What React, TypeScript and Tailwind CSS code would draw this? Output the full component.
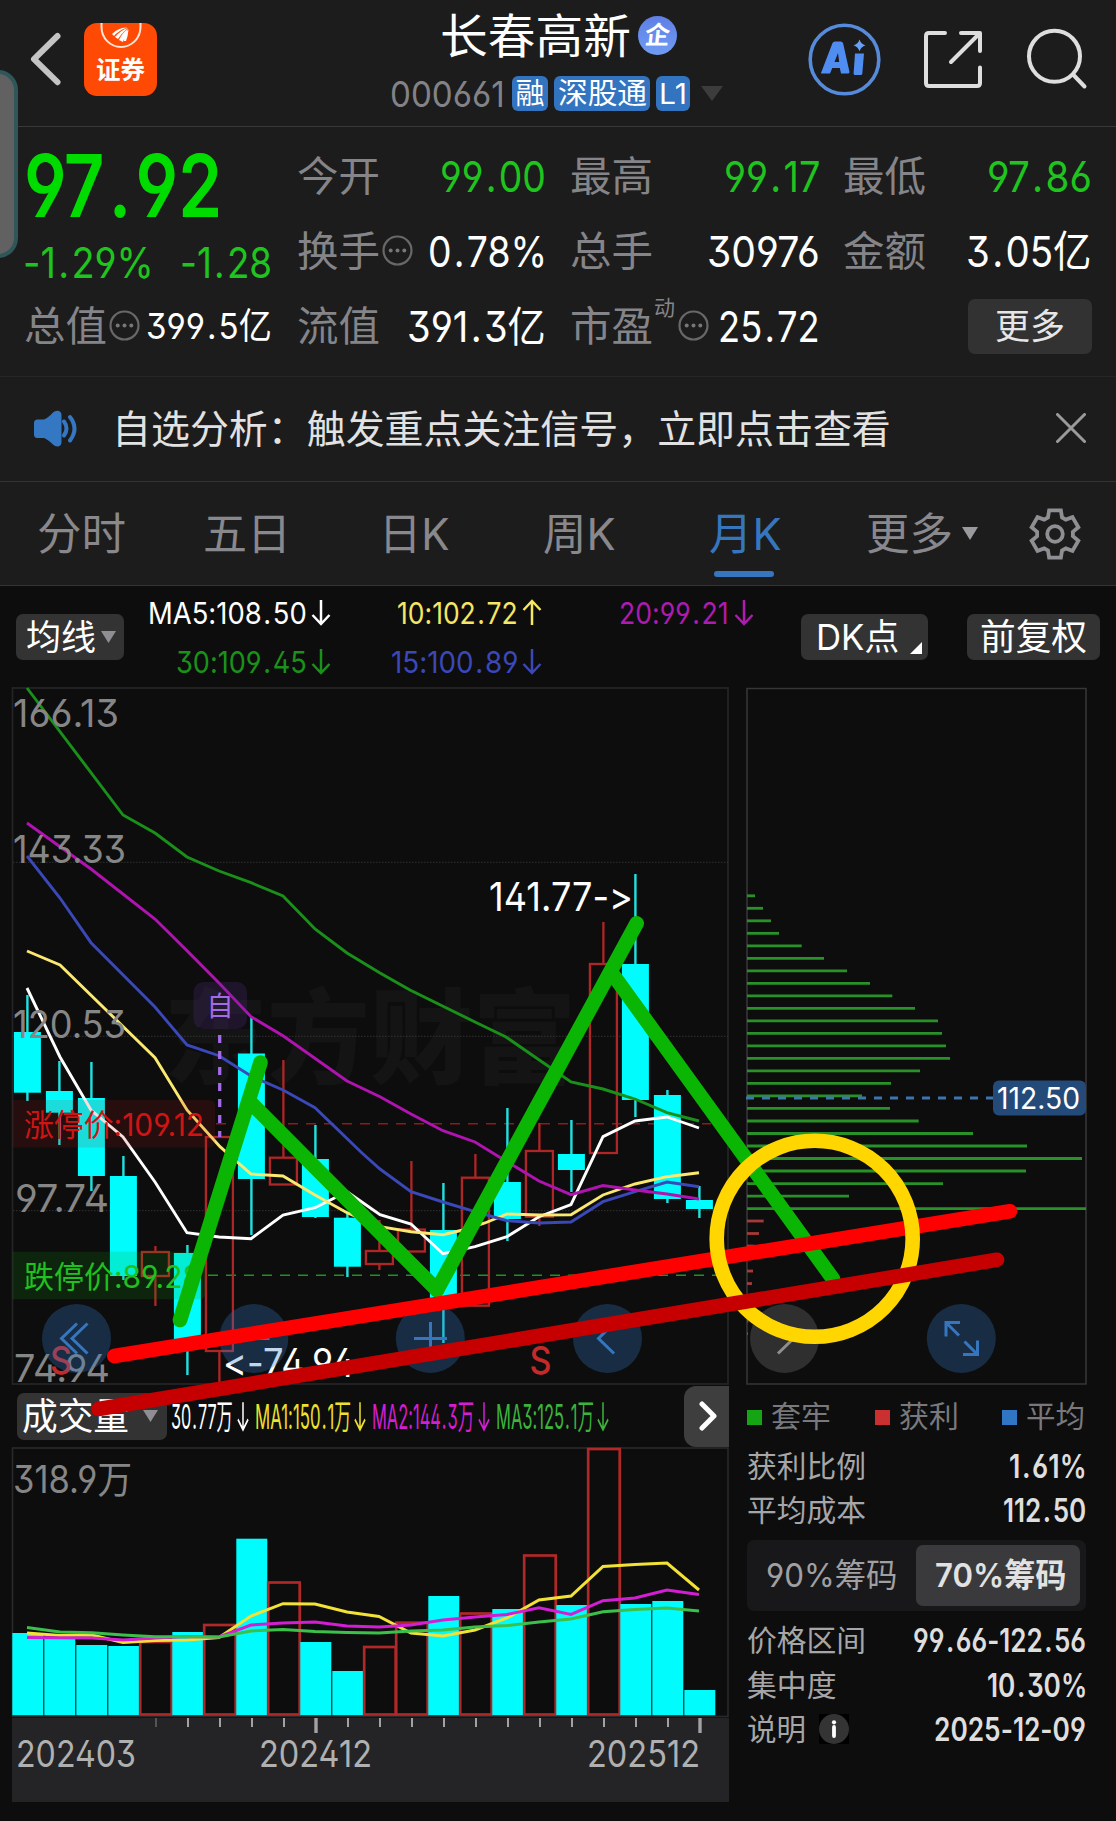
import React, { useLayoutEffect, useRef, useState } from "react";

/* Decimal points get a little extra room on both sides. */
function spaced(node: React.ReactNode): React.ReactNode {
  if (typeof node !== "string" || !node.includes(".")) return node;
  const [head, ...rest] = node.split(".");
  return (
    <>
      {head}
      {rest.map((part, i) => (
        <React.Fragment key={i}>
          <span className="mx-[0.06em]">.</span>
          {part}
        </React.Fragment>
      ))}
    </>
  );
}

/* Squeezes or stretches a line of text horizontally so it fills the width of its box. */
function Fit({ className, children }: { className: string; children: React.ReactNode }) {
  const outer = useRef<HTMLSpanElement>(null);
  const inner = useRef<HTMLSpanElement>(null);
  const [scale, setScale] = useState(1);
  useLayoutEffect(() => {
    if (outer.current && inner.current) {
      setScale(outer.current.offsetWidth / inner.current.offsetWidth);
    }
  }, []);
  return (
    <span ref={outer} className={`flex shrink-0 items-center whitespace-nowrap leading-none ${className}`}>
      <span ref={inner} className="inline-block origin-left" style={{ transform: `scaleX(${scale})` }}>
        {spaced(children)}
      </span>
    </span>
  );
}

function Dots() {
  return (
    <svg width="31" height="31" viewBox="0 0 31 31" className="-mt-[2px] shrink-0">
      <circle cx="15.5" cy="15.5" r="14" fill="none" stroke="#68686b" strokeWidth="2.2" />
      <g fill="#77777a">
        <circle cx="8.7" cy="15.5" r="2" />
        <circle cx="15.5" cy="15.5" r="2" />
        <circle cx="22.3" cy="15.5" r="2" />
      </g>
    </svg>
  );
}

function Arrow({ up, w = 20, h = 27 }: { up?: boolean; w?: number; h?: number }) {
  return (
    <svg width={w} height={h} viewBox="0 0 20 27" preserveAspectRatio="none" className="shrink-0">
      <path
        d={up ? "M10 26V2M1.5 11 10 2l8.500 9" : "M10 1v24M1.500 16 10 25l8.500-9"}
        fill="none"
        stroke="currentColor"
        strokeWidth="2.500"
      />
    </svg>
  );
}

function Header() {
  return (
    <header className="flex h-[127px] border-b border-[#383838]">
      <div className="flex w-[391px] pl-[28px] pt-[23px]">
        <svg width="36" height="73" viewBox="28 23 36 73">
          <path d="M57.500 36 34 59.200l23.500 23" fill="none" stroke="#c4c4c4" strokeWidth="6" strokeLinecap="round" strokeLinejoin="round" />
        </svg>
        <div className="ml-[20px] flex h-[73px] w-[73px] flex-col items-center overflow-hidden rounded-[13px] bg-[#ff4a05]">
          <svg width="44" height="27" viewBox="0 0 44 27">
            <path d="M2.500 0v4a19.500 20 0 0 0 39 0V0" fill="none" stroke="#ffe4d8" strokeWidth="2" />
            <path d="M13 11Q20 4 28 4.500Q19 8 15 13ZM16 14Q22 7 29 5Q22 11 19 16ZM20 17Q23 10 29 6Q26 12 24 19ZM25 18Q25 11 29.500 6.500Q29 13 27 18Z" fill="#fff" />
          </svg>
          <Fit className="mt-[7px] h-[26px] w-[49px] text-[25px] font-bold text-white">证券</Fit>
        </div>
      </div>
      <div className="flex w-[400px] flex-col">
        <div className="flex h-[70px] items-center pl-[49px]">
          <Fit className="w-[191px] text-[47px] text-white">长春高新</Fit>
          <span className="ml-[7px] flex h-[39px] w-[39px] items-center justify-center rounded-full bg-gradient-to-b from-[#5f7fe6] to-[#6f9cf2] text-[25px] font-bold leading-none text-white">
            <span className="-skew-x-6">企</span>
          </span>
        </div>
        <div className="mt-[6px] flex h-[35px] items-center">
          <Fit className="-ml-px w-[115px] text-[36px] text-[#838387]">000661</Fit>
          <span className="ml-[7px] flex h-[35px] w-[36px] items-center justify-center rounded-[6px] bg-[#3274bf] text-[29px] leading-none text-white">融</span>
          <span className="ml-[6px] flex h-[35px] w-[96px] items-center justify-center rounded-[6px] bg-[#3274bf] text-[29px] leading-none text-white">
            <Fit className="w-[89px]">深股通</Fit>
          </span>
          <span className="ml-[6px] flex h-[35px] w-[34px] items-center justify-center rounded-[6px] bg-[#3274bf] text-[29px] leading-none text-white">
            <Fit className="w-[28px]">L1</Fit>
          </span>
          <svg width="22" height="15" viewBox="0 0 22 15" className="ml-[11px]">
            <path d="M0 0h22L11 15Z" fill="#3c3c3d" />
          </svg>
        </div>
      </div>
      <div className="flex pl-[17px] pt-[23px]">
        <svg width="74" height="74" viewBox="808 23 74 74">
          <circle cx="844.500" cy="59.500" r="34.300" fill="none" stroke="#568bdc" strokeWidth="3.600" />
          <path fillRule="evenodd" d="M821 73 832.500 43q.8-1.500 2.500-1.500h5.500q2 0 2.600 1.800L849.500 72q0 1.500-1.500 1.500h-7l-1.200-5.500h-7.500l-2.300 5.500h-7.500q-1.500 0-1.500-.5ZM834.500 62h4.700l-1.200-9Z" fill="#4f8df0" />
          <path d="M855 53.500h9l-1.700 20q-.2 1.500-1.600 1.500h-5.600q-1.600 0-1.500-1.500Z" fill="#4f8df0" />
          <path d="M859.500 39.500q1.500 4.500 6 5.800-4.500 1.500-6 6-1.500-4.500-6-6 4.500-1.300 6-5.800Z" fill="#69a0f4" />
        </svg>
        <svg width="62" height="62" viewBox="922 29 62 62" className="ml-[40px] mt-[6px]" fill="none" stroke="#dedede" strokeWidth="4" strokeLinecap="round" strokeLinejoin="round">
          <path d="M945 33H929q-3 0-3 3v47q0 3 3 3h48q3 0 3-3V67.500M961 33h19v18M951 62l28-28" />
        </svg>
        <svg width="64" height="64" viewBox="1025 26 64 64" className="ml-[41px] mt-[3px]" fill="none" stroke="#dedede" strokeWidth="4" strokeLinecap="round">
          <circle cx="1054.500" cy="56.300" r="25.500" />
          <path d="m1073.500 75 11 11.500" />
        </svg>
      </div>
    </header>
  );
}

const cell = "flex h-[75px] items-center justify-between";
const lbl = "-ml-px w-[83px] text-[41px] text-[#858589]";

function Quotes() {
  return (
    <section className="flex h-[250px] border-b border-[#262626] pl-[25px] pt-[12px]">
      <div className="w-[247px]">
        <div className="flex h-[94px] items-center">
          <Fit className="-ml-px w-[198px] text-[86px] font-semibold text-[#00dc00]">97.92</Fit>
        </div>
        <div className="flex h-[59px] items-center justify-between text-[#1fc41f]">
          <Fit className="-ml-[2px] w-[131px] text-[42px]">-1.29%</Fit>
          <Fit className="w-[92px] text-[42px]">-1.28</Fit>
        </div>
        <div className="flex h-[68px] items-center">
          <Fit className={lbl}>总值</Fit>
          <span className="ml-[2px]"><Dots /></span>
          <Fit className="ml-[6px] w-[126px] text-[36px] text-white">399.5亿</Fit>
        </div>
      </div>
      <div className="ml-[26px] w-[248px]">
        <div className={cell}>
          <Fit className={lbl}>今开</Fit>
          <Fit className="w-[106px] text-[43px] text-[#1fc41f]">99.00</Fit>
        </div>
        <div className={cell}>
          <div className="flex items-center gap-[2px]"><Fit className={lbl}>换手</Fit><Dots /></div>
          <Fit className="-mr-px w-[119px] text-[43px] text-white">0.78%</Fit>
        </div>
        <div className={cell}>
          <Fit className={lbl}>流值</Fit>
          <Fit className="w-[139px] text-[42px] text-white">391.3亿</Fit>
        </div>
      </div>
      <div className="ml-[25px] w-[249px]">
        <div className={cell}>
          <Fit className={lbl}>最高</Fit>
          <Fit className="w-[96px] text-[43px] text-[#1fc41f]">99.17</Fit>
        </div>
        <div className={cell}>
          <Fit className={lbl}>总手</Fit>
          <Fit className="w-[113px] text-[43px] text-white">30976</Fit>
        </div>
        <div className={cell}>
          <div className="flex items-center">
            <Fit className={lbl}>市盈</Fit>
            <span className="-mt-[38px] ml-[1px] text-[21px] leading-none text-[#858589]">动</span>
            <span className="ml-[3px]"><Dots /></span>
          </div>
          <Fit className="w-[102px] text-[42px] text-white">25.72</Fit>
        </div>
      </div>
      <div className="ml-[24px] w-[248px]">
        <div className={cell}>
          <Fit className={lbl}>最低</Fit>
          <Fit className="w-[105px] text-[43px] text-[#1fc41f]">97.86</Fit>
        </div>
        <div className={cell}>
          <Fit className={lbl}>金额</Fit>
          <Fit className="w-[126px] text-[43px] text-white">3.05亿</Fit>
        </div>
        <div className="flex h-[75px] items-center justify-end">
          <button className="flex h-[55px] w-[124px] items-center justify-center rounded-[7px] bg-[#323232] text-[35px] leading-none text-[#e6e6e6]">更多</button>
        </div>
      </div>
    </section>
  );
}

function Notice() {
  return (
    <section className="flex h-[105px] items-center border-b border-[#333] pl-[34px]">
      <svg width="44" height="38" viewBox="0 0 44 38">
        <path d="M0 13q0-3.500 3.500-3.500H10Q14 8 19 2.500Q21 .5 24 .8Q27.500 1.500 27.500 5v27q0 3.800-3.500 4.500-3 .2-5-2Q14 29.500 10 28H3.500Q0 28 0 24.500Z" fill="#3478c4" />
        <path d="M30 11.500q5 7 0 14M36 7q9 11.500 0 23.500" fill="none" stroke="#3478c4" strokeWidth="4" strokeLinecap="round" />
      </svg>
      <Fit className="ml-[34px] w-[779px] text-[38.900px] text-[#e2e2e2]">自选分析：触发重点关注信号，立即点击查看</Fit>
      <svg width="30" height="30" viewBox="0 0 30 30" className="-mt-[2px] ml-[165px]">
        <path d="m1.500 1.500 27 27m0-27-27 27" stroke="#9b9b9b" strokeWidth="3" strokeLinecap="round" />
      </svg>
    </section>
  );
}

const gear = Array.from({ length: 6 }, (_, k) =>
  [[18, -23], [24.300, -14], [24.300, 14], [18, 23]].map(([r, d]) => {
    const a = ((k * 60 - 90 + d) * Math.PI) / 180;
    return `${(26 + r * Math.cos(a)).toFixed(2)},${(26 + r * Math.sin(a)).toFixed(2)}`;
  }).join(" ")
).join(" ");

function Tabs() {
  return (
    <nav className="flex h-[104px] items-center border-b border-[#343434] pl-[37px] text-[44px] text-[#88888d]">
      <Fit className="w-[89px]">分时</Fit>
      <Fit className="ml-[77px] w-[88px]">五日</Fit>
      <Fit className="ml-[88px] w-[71px]">日K</Fit>
      <Fit className="ml-[93px] w-[73px]">周K</Fit>
      <div className="relative ml-[93px] flex h-full items-center text-[#3576bf]">
        <Fit className="w-[73px]">月K</Fit>
        <span className="absolute bottom-[8px] left-[5px] h-[6px] w-[60px] rounded-full bg-[#3576bf]" />
      </div>
      <Fit className="ml-[84px] w-[87px]">更多</Fit>
      <svg width="16" height="13" viewBox="0 0 16 13" className="ml-[9px]"><path d="M0 0h16L8 13Z" fill="#9a9a9e" /></svg>
      <svg width="52" height="52" viewBox="0 0 52 52" className="ml-[51px]" fill="none" stroke="#8e8e93">
        <polygon points={gear} strokeWidth="3.800" strokeLinejoin="miter" />
        <circle cx="26" cy="26" r="7.800" strokeWidth="3.800" />
      </svg>
    </nav>
  );
}

function Averages() {
  return (
    <section className="flex h-[102px] pl-[16px] text-[30px]">
      <button className="mt-[28px] flex h-[46px] w-[108px] items-center rounded-[7px] bg-[#333] pl-[10px] text-[35px] text-white">
        <Fit className="w-[70px]">均线</Fit>
        <svg width="15" height="12" viewBox="0 0 15 12" className="ml-[5px]"><path d="M0 0h15L7.500 12Z" fill="#8e8e93" /></svg>
      </button>
      <div className="flex w-[207px] flex-col items-end pt-[2px]">
        <div className="flex h-[49px] items-center gap-[4px] text-white"><Fit className="w-[159px]">MA5:108.50</Fit><Arrow /></div>
        <div className="flex h-[49px] items-center gap-[4px] text-[#1a921a]"><Fit className="w-[131px]">30:109.45</Fit><Arrow /></div>
      </div>
      <div className="flex w-[211px] flex-col items-end pt-[2px]">
        <div className="flex h-[49px] items-center gap-[4px] text-[#f5e663]"><Fit className="w-[121px]">10:102.72</Fit><Arrow up /></div>
        <div className="flex h-[49px] items-center gap-[4px] text-[#3a48b8]"><Fit className="w-[127px]">15:100.89</Fit><Arrow /></div>
      </div>
      <div className="flex w-[212px] flex-col items-end pt-[2px]">
        <div className="flex h-[49px] items-center gap-[5px] text-[#ae1bae]"><Fit className="w-[110px]">20:99.21</Fit><Arrow /></div>
      </div>
      <button className="ml-[47px] mt-[28px] flex h-[46px] w-[127px] items-center rounded-[7px] bg-[#333] pl-[15px] text-[36px] text-white">
        <Fit className="w-[83px]">DK点</Fit>
        <svg width="12" height="12" viewBox="0 0 12 12" className="ml-[11px] mt-[21px]"><path d="M12 0v12H0Z" fill="#fff" /></svg>
      </button>
      <button className="ml-[39px] mt-[28px] flex h-[46px] w-[133px] items-center justify-center rounded-[7px] bg-[#333] text-[36px] text-white">
        <Fit className="w-[107px]">前复权</Fit>
      </button>
    </section>
  );
}

/* [high, body top, body bottom, low, rising] */
const candles: [number, number, number, number, boolean][] = [
  [995, 1032, 1092.7, 1101, false], [1061, 1091, 1112.7, 1145, false], [1062, 1098, 1176, 1191, false],
  [1156, 1176, 1276, 1280, false], [1246, 1252, 1276, 1306, true], [1245, 1253, 1339, 1375, false],
  [1137, 1137, 1351, 1382, true], [1017, 1053.500, 1179, 1235, false], [1060, 1157.700, 1184.500, 1184.500, true],
  [1125, 1159, 1217, 1218, false], [1214, 1217.700, 1266.700, 1277, false], [1220, 1251, 1264, 1270, true],
  [1161, 1229.500, 1251.500, 1251.500, true], [1183, 1230, 1298, 1343, false], [1154, 1177.700, 1305.700, 1305.700, true],
  [1108, 1182, 1219, 1241, false], [1123, 1151, 1216.700, 1226, true], [1120, 1154, 1170, 1192, false],
  [922, 964, 1153, 1153, true], [874, 964, 1100, 1117, false], [1090, 1095, 1199, 1203, false], [1186, 1200, 1209, 1218, false],
];

const maLines: [string, string][] = [
  ["#fff", "27,988 60,1057 91,1110 123,1137 155,1182 187,1232.700 219,1237 251,1238.700 283,1215 315,1207.700 347,1191.700 360,1200.700 380,1214.700 411,1224 443,1253.700 475,1246.700 507,1236.700 539,1216.700 571,1204.700 603,1136.700 635,1121 667,1117 699,1128"],
  ["#fbe870", "27,951 60,965 155,1057.700 187,1110 220,1146.700 251,1174 283,1176 315,1195 347,1212.700 380,1226.700 411,1231.700 443,1234.700 463,1230 485,1223 507,1214 539,1215 571,1214.700 603,1195 635,1184 667,1176.700 699,1172.700"],
  ["#3a48b8", "27,856 60,898 91,942.700 155,1007 187,1045 219,1055.700 251,1076 283,1090 315,1107.700 362,1153 380,1169 411,1191.700 443,1202 475,1211.700 507,1220.700 539,1223 571,1222 603,1201.700 635,1191.700 667,1182 699,1186.700"],
  ["#b014b0", "27,823 91,869 155,919 187,950.700 219,983 251,1016.700 283,1035.700 347,1081 380,1096.700 411,1114 443,1130.700 475,1142 507,1161.700 539,1181 571,1194.700 603,1185.500 635,1190 667,1194 699,1199"],
  ["#1a901a", "27,688 123,815 155,833 187,857 219,871 251,882.700 283,896 315,929 347,953 380,973 410,990 475,1022 506,1037 571,1082 603,1089 635,1099 667,1112.700 699,1121"],
];

const scale: [string, number, number, number][] = [
  ["166.13", 727, 13, 106], ["143.33", 863, 13, 113], ["120.53", 1037.600, 13, 113], ["97.74", 1211.700, 15, 94], ["74.94", 1382, 14, 96],
];

const fit = { lengthAdjust: "spacingAndGlyphs" } as const;

function RoundButton({ x, muted, d }: { x: number; muted?: boolean; d: string }) {
  return (
    <g>
      <circle cx={x} cy="1338.500" r="34.500" fill={muted ? "rgba(125,125,125,.3)" : "rgba(50,118,196,.3)"} />
      <path d={d} fill="none" stroke={muted ? "#8f8f8f" : "#3576bf"} strokeWidth="3" />
    </g>
  );
}

function PriceChart() {
  return (
    <svg width="738" height="698" viewBox="0 687 738 698" className="block">
      <text x="164" y="1076" fontSize="103" fontWeight="900" fill="#141414">东方财富</text>
      <rect x="12.500" y="688" width="715.500" height="696" fill="none" stroke="#242426" strokeWidth="1.800" />
      {[862.300, 1036.300, 1210.700].map((y) => (
        <path key={y} d={`M13 ${y}H728`} stroke="#333" strokeWidth="1" strokeDasharray="1.500 1.500" />
      ))}
      <path d="M216 1123.700H711" stroke="#8e1a1a" strokeWidth="1.500" strokeDasharray="10 8" />
      <path d="M208 1275.300H717" stroke="#229022" strokeWidth="1.500" strokeDasharray="10 8" />
      {candles.map(([hi, top, bot, lo, up], i) => {
        const x = 27.400 + i * 32;
        return up ? (
          <g key={i} fill="none" stroke="#b02626" strokeWidth="2.300">
            <path d={`M${x} ${hi}V${top}M${x} ${bot}V${lo}`} />
            <rect x={x - 13.500} y={top} width="27" height={bot - top} />
          </g>
        ) : (
          <g key={i} fill="#00fcfc">
            <rect x={x - 1.200} y={hi} width="2.400" height={lo - hi} fill="#22e0e0" />
            <rect x={x - 13.500} y={top} width="27" height={bot - top} />
          </g>
        );
      })}
      {maLines.map(([c, pts]) => (
        <polyline key={c} points={pts} fill="none" stroke={c} strokeWidth="2.900" />
      ))}
      <rect x="193.500" y="982" width="53.500" height="47" rx="10" fill="#5a3090" fillOpacity=".23" />
      <text x="206.500" y="1016" fontSize="27" fill="#a26ce8">自</text>
      <path d="M219.700 1035V1137" stroke="#a26ce8" strokeWidth="3.300" strokeDasharray="8 8" />
      <path d="M12.500 1100H209q6 0 6 6v35.500q0 6-6 6H12.500Z" fill="#c81414" fillOpacity=".14" />
      <text x="24" y="1135.500" fontSize="31" textLength="180" {...fit} fill="#d01414">涨停价:109.12</text>
      <path d="M12.500 1251.700H199q6 0 6 6v35.500q0 6-6 6H12.500Z" fill="#14a014" fillOpacity=".17" />
      <text x="24" y="1287.500" fontSize="31" textLength="177" {...fit} fill="#20c020">跌停价:89.28</text>
      <g fill="#868686" fontSize="38.500">
        {scale.map(([t, y, x, w]) => (
          <text key={t} x={x} y={y} textLength={w} {...fit}>{t}</text>
        ))}
      </g>
      <g fill="#fff" fontSize="39">
        <text x="489" y="911" textLength="144" {...fit}>141.77-&gt;</text>
        <text x="223" y="1377" textLength="132" {...fit}>&lt;-74.94</text>
      </g>
      <g fill="#c42a2a" fontSize="38.500" fontWeight="500">
        <text x="50" y="1373.500" textLength="22" {...fit}>S</text>
        <text x="529.500" y="1373.500" textLength="22" {...fit}>S</text>
      </g>
      <RoundButton x={76.500} d="M77 1323.500 61.500 1338.500 77 1353.500M87.500 1323.500 72 1338.500l15.500 15" />
      <RoundButton x={253.800} d="M237.500 1338.500h32" />
      <RoundButton x={430.300} d="M414 1338.500h33M430.500 1322v33" />
      <RoundButton x={607.500} d="M614 1323 598.500 1338.500l15.500 15" />
    </svg>
  );
}

const chips = [75, 99, 123, 147, 215, 282, 351, 420, 487, 555, 624, 636, 648, 660, 570, 483, 396, 480, 566, 729, 891, 1056, 888, 639, 357, 1068];
const profit = [101, 87, 74, 71, 69, 66, 62, 57, 55, 54];

function ChipChart() {
  return (
    <svg width="378" height="698" viewBox="738 687 378 698" className="block">
      <path d="M747 688.500H1086V1384H747Z" fill="none" stroke="#363638" strokeWidth="1.600" />
      {chips.map((v, i) => (
        <path key={i} d={`M747 ${895.800 + i * 12.510}H${730 + v / 3}`} stroke="#289228" strokeWidth="2.800" />
      ))}
      {profit.map((v, i) => (
        <path key={i} d={`M747 ${1221 + i * 12.510}H${730 + v / 3}`} stroke="#a63a38" strokeWidth="2.800" />
      ))}
      <path d="M746 1098H993" stroke="#3e74b0" strokeWidth="3.200" strokeDasharray="8 8" />
      <rect x="993" y="1080.500" width="93" height="35" rx="6" fill="#244a7a" />
      <text x="997" y="1108.700" fontSize="29.500" textLength="83" {...fit} fill="#fff">112.50</text>
      <RoundButton x={784.500} muted d="M778 1323l15.500 15.500L778 1353.500" />
      <RoundButton x={961.300} d="M960 1322.500h-14v14M946 1322.500l13 13M963 1354.500h14.500v-14M977.500 1354.500l-13-13" />
    </svg>
  );
}

function VolumeBar() {
  return (
    <div className="flex h-[62px] items-center pl-[17px] text-[34px]">
      <button className="flex h-[47px] w-[150px] items-center rounded-[7px] bg-[#333] pl-[5px] text-[37px] text-white">
        <Fit className="mt-px w-[107px]">成交量</Fit>
        <svg width="15" height="12" viewBox="0 0 15 12" className="ml-[14px]"><path d="M0 0h15L7.500 12Z" fill="#8e8e93" /></svg>
      </button>
      <div className="ml-[4px] flex items-center gap-[4px] pt-px text-white"><Fit className="w-[62px]">30.77万</Fit><Arrow w={12} h={31} /></div>
      <div className="ml-[6px] flex items-center gap-[3px] pt-px text-[#eee02c]"><Fit className="w-[96px]">MA1:150.1万</Fit><Arrow w={12} h={31} /></div>
      <div className="ml-[6px] flex items-center gap-[4px] pt-px text-[#d41ed4]"><Fit className="w-[102px]">MA2:144.3万</Fit><Arrow w={12} h={31} /></div>
      <div className="ml-[6px] flex items-center gap-[3px] pt-px text-[#3cb43c]"><Fit className="w-[98px]">MA3:125.1万</Fit><Arrow w={12} h={31} /></div>
      <button className="ml-auto mr-[17px] flex h-[61px] w-[45px] items-center justify-end rounded-l-[12px] bg-[#3e3e3e] pr-[10px]">
        <svg width="20" height="30" viewBox="0 0 20 30"><path d="m3 3 12 12L3 27" fill="none" stroke="#fff" strokeWidth="5" strokeLinecap="round" strokeLinejoin="round" /></svg>
      </button>
    </div>
  );
}

/* [bar top, rising] */
const volumes: [number, boolean][] = [
  [1633, false], [1639, false], [1645, false], [1646, false], [1642, true], [1632, false], [1625, true], [1538.700, false],
  [1582.500, true], [1642, false], [1671, false], [1647, true], [1622.700, true], [1596, false], [1613.500, true], [1609, false],
  [1555.500, true], [1605, false], [1449, true], [1604, false], [1601, false], [1690, false],
];

const volLines: [string, string][] = [
  ["#f2e235", "27,1633 60,1635.500 92,1635 123,1642.500 155,1640.500 187,1640 219,1637.500 251,1616 283,1603.700 315,1604 347,1612 379,1616.500 411,1633 443,1636 475,1630 507,1618 539,1600 571,1596 603,1566.500 635,1564.500 667,1563 699,1590"],
  ["#d41ed4", "27,1637.500 92,1638 123,1640 155,1638 187,1636.500 219,1637 251,1625 283,1623 315,1622 347,1626 379,1627 411,1625 443,1620 475,1617 507,1614.500 539,1607.700 571,1614.500 603,1600.700 635,1598 667,1590 699,1594.500"],
  ["#3cc04c", "27,1627.500 60,1632 92,1632.700 123,1635 155,1636.700 187,1636.700 219,1637 251,1631 283,1629.500 315,1631.500 347,1632.500 379,1633 411,1631 443,1630 475,1627 507,1625.500 539,1622 571,1619 603,1611.700 635,1609.500 667,1608 699,1611"],
];

function VolumeChart() {
  return (
    <svg width="738" height="355" viewBox="0 1447 738 355" className="block">
      <rect x="12.500" y="1448" width="715.500" height="268.500" fill="none" stroke="#2a2a2c" strokeWidth="1.600" />
      <text x="13" y="1492.500" fontSize="37.500" textLength="119" {...fit} fill="#868686">318.9万</text>
      {volumes.map(([top, up], i) =>
        up ? (
          <rect key={i} x={12.200 + i * 32} y={top} width="31.500" height={1714.500 - top} fill="none" stroke="#b02828" strokeWidth="2.700" />
        ) : (
          <rect key={i} x={12.300 + i * 32} y={top} width="31" height={1715.300 - top} fill="#00fcfc" />
        )
      )}
      {volLines.map(([c, pts]) => (
        <polyline key={c} points={pts} fill="none" stroke={c} strokeWidth="3" />
      ))}
      <rect x="12" y="1718" width="717" height="84" fill="#242426" />
      {Array.from({ length: 18 }, (_, i) => {
        const major = i === 5 || i === 17;
        return <path key={i} d={`M${156 + i * 32} 1718v${major ? 15 : 9}`} stroke={i === 0 ? "#555" : "#a2a2a4"} strokeWidth={major ? 3.400 : 2} />;
      })}
      <g fill="#b0b0b0" fontSize="36.500">
        <text x="16" y="1767" textLength="120" {...fit}>202403</text>
        <text x="259" y="1767" textLength="113" {...fit}>202412</text>
        <text x="587" y="1767" textLength="113" {...fit}>202512</text>
      </g>
    </svg>
  );
}

const name = "text-[29.500px] text-[#a6a6a8]";
const value = "text-[32px] font-semibold text-[#dedede]";

function ChipStats() {
  return (
    <div className="flex w-[340px] flex-col pl-px pt-px">
      <div className="flex h-[62px] items-center justify-between pr-[1px] text-[29.500px] text-[#79797d]">
        <span className="flex items-center gap-[9px]"><i className="h-[15px] w-[15px] bg-[#14a414]" /><Fit className="w-[60px]">套牢</Fit></span>
        <span className="flex items-center gap-[9px]"><i className="h-[15px] w-[15px] bg-[#cb3030]" /><Fit className="w-[60px]">获利</Fit></span>
        <span className="flex items-center gap-[9px]"><i className="h-[15px] w-[15px] bg-[#3076c4]" /><Fit className="w-[59px]">平均</Fit></span>
      </div>
      <div className="flex h-[38px] items-center justify-between"><Fit className={`w-[119px] ${name}`}>获利比例</Fit><Fit className={`-mr-px w-[78px] ${value}`}>1.61%</Fit></div>
      <div className="mt-[6px] flex h-[38px] items-center justify-between"><Fit className={`w-[119px] ${name}`}>平均成本</Fit><Fit className={`w-[83px] ${value}`}>112.50</Fit></div>
      <div className="mt-[10px] flex h-[71px] items-center rounded-[7px] bg-[#18181a] pl-[19px] text-[33px]">
        <Fit className="w-[131px] text-[#a0a0a2]">90%筹码</Fit>
        <span className="ml-[19px] flex h-[61px] w-[164px] items-center justify-center rounded-[7px] bg-[#3a3a3c]">
          <Fit className="ml-[4px] w-[131px] font-semibold text-[#e2e2e2]">70%筹码</Fit>
        </span>
      </div>
      <div className="mt-[11px] flex h-[38px] items-center justify-between"><Fit className={`w-[119px] ${name}`}>价格区间</Fit><Fit className={`w-[173px] ${value}`}>99.66-122.56</Fit></div>
      <div className="mt-[7px] flex h-[38px] items-center justify-between"><Fit className={`w-[90px] ${name}`}>集中度</Fit><Fit className={`-mr-px w-[100px] ${value}`}>10.30%</Fit></div>
      <div className="mt-[6px] flex h-[38px] items-center">
        <Fit className={`w-[59px] ${name}`}>说明</Fit>
        <svg width="30" height="30" viewBox="0 0 30 30" className="-mt-[2px] ml-[13px]">
          <rect width="30" height="30" fill="#000" />
          <circle cx="15" cy="15" r="15" fill="#343434" />
          <circle cx="15" cy="8.300" r="2.100" fill="#fff" />
          <path d="M15 13v9" stroke="#fff" strokeWidth="3.800" strokeLinecap="round" />
        </svg>
        <Fit className={`ml-auto w-[152px] ${value}`}>2025-12-09</Fit>
      </div>
    </div>
  );
}

function Drawing() {
  return (
    <svg width="1116" height="741" viewBox="0 687 1116 741" className="pointer-events-none absolute left-0 top-0" fill="none" strokeLinecap="round" strokeWidth="14.600">
      <g stroke="#0bb503">
        <path d="M180 1320 260.500 1062.500" />
        <path d="M252 1104 437 1290" />
        <path d="M437 1290 636.700 923.300" />
        <path d="M614 976 833 1279" />
      </g>
      <path d="M114.300 1356 1010 1211.200" stroke="#f00" />
      <circle cx="814.700" cy="1238.800" r="98" stroke="#ffd600" />
      <path d="M98.500 1409 997 1259.800" stroke="#c60000" />
    </svg>
  );
}

export default function App() {
  return (
    <main className="relative h-[1821px] w-[1116px] overflow-hidden bg-[#0d0d0d] font-['Inter','Noto_Sans_CJK_SC',sans-serif] [font-feature-settings:'ss01','calt'_0]">
      <div className="bg-[#1c1c1c]">
        <Header />
        <Quotes />
        <Notice />
        <Tabs />
      </div>
      <Averages />
      <div className="relative -mt-px">
        <div className="flex">
          <PriceChart />
          <ChipChart />
        </div>
        <div className="flex">
          <div className="w-[746px]">
            <VolumeBar />
            <VolumeChart />
          </div>
          <ChipStats />
        </div>
        <Drawing />
      </div>
      <div className="absolute -left-[6px] top-[70px] h-[188px] w-[24px] rounded-r-[20px] border-[4px] border-[#2f5658] bg-[#616161]" />
    </main>
  );
}
